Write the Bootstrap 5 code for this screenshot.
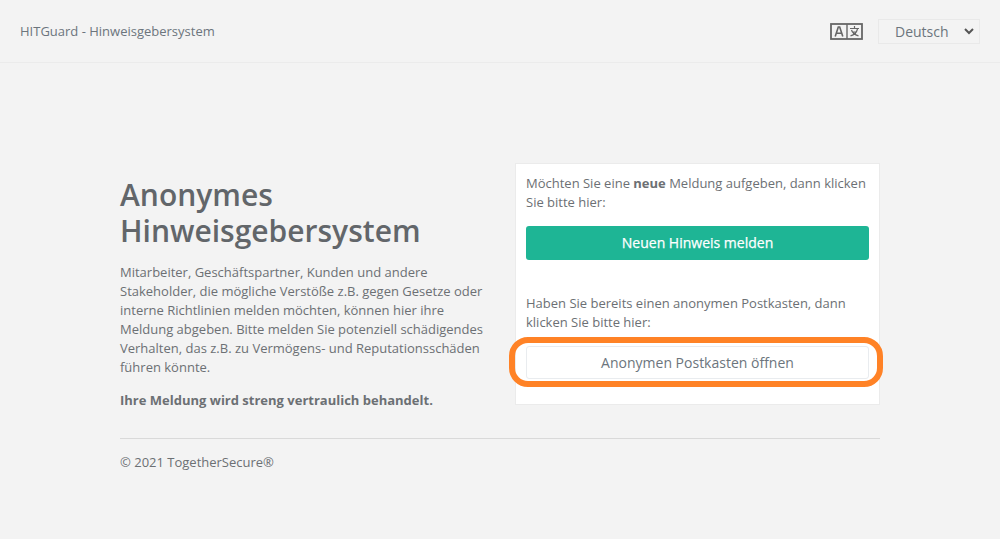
<!DOCTYPE html>
<html lang="de">
<head>
    <meta charset="UTF-8">
    <meta name="viewport" content="width=device-width, initial-scale=1.0">
    <title>HITGuard - Hinweisgebersystem</title>
    <link href="https://cdn.jsdelivr.net/npm/bootstrap@5.3.0/dist/css/bootstrap.min.css" rel="stylesheet">
    <style>
        body {
            background: #f3f3f3;
            color: #6c7074;
            font-family: "Open Sans", sans-serif;
            font-size: 13px;
            line-height: 19px;
        }
        .top-bar {
            height: 63px;
            padding: 0 20px;
            border-bottom: 1px solid #ebebeb;
        }
        .brand-text { font-size: 13px; color: #6c757d; }
        .lang-tools { gap: 15px; }
        .lang-select {
            width: 102px;
            height: 25px;
            padding: 0 0 0 16px;
            font-size: 14px;
            line-height: 23px;
            color: #6c757d;
            background-color: #f3f3f3;
            background-image: url("data:image/svg+xml,%3csvg xmlns='http://www.w3.org/2000/svg' viewBox='0 0 10 7'%3e%3cpath fill='none' stroke='%23555' stroke-width='2' d='M1 1l4 4 4-4'/%3e%3c/svg%3e");
            background-position: right 5px center;
            background-size: 10px 7px;
            border: 1px solid #e9e9e9;
            border-radius: 0;
        }
        .page-body {
            width: 760px;
            margin: 0 auto;
            padding-top: 100px;
        }
        .intro-col { width: 365px; padding-top: 14px; }
        .intro-col h1 {
            font-size: 30px;
            line-height: 36px;
            font-weight: 600;
            color: #62666a;
            margin-bottom: 14px;
        }
        .intro-col p { margin-bottom: 14px; }
        .intro-col p:last-child { margin-bottom: 0; }
        .action-box {
            width: 365px;
            height: 242px;
            padding: 10px;
            background: #fff;
            border: 1px solid #ebebeb;
        }
        .action-box p { margin: 0; }
        .btn-report {
            height: 34px;
            margin: 14px 0 34px;
            font-size: 14px;
            line-height: 34px;
            padding: 0;
            color: #fff;
            -webkit-text-stroke: 0.25px #fff;
            background: #1eb595;
            border: 0;
            border-radius: 3px;
        }
        .btn-mailbox {
            height: 33px;
            font-size: 14px;
            line-height: 31px;
            padding: 0;
            color: #6c757d;
            background: #fff;
            border: 1px solid #e9ecef;
            border-radius: 3px;
        }
        .mailbox-wrap { position: relative; margin-top: 14px; }
        .ring-mark {
            position: absolute;
            left: -17px;
            right: -14px;
            top: -9px;
            bottom: -8px;
            border: 6px solid #ff8226;
            border-radius: 19px;
            pointer-events: none;
        }
        .page-foot {
            margin-top: 28px;
            padding-top: 14px;
            border-top: 1px solid #d9d9d9;
        }
    </style>
</head>
<body>
    <header class="top-bar d-flex align-items-center justify-content-between">
        <span class="brand-text">HITGuard - Hinweisgebersystem</span>
        <div class="lang-tools d-flex align-items-center">
            <svg width="33" height="17" viewBox="0 0 33 17" aria-hidden="true">
                <rect x="1" y="1" width="31" height="15" fill="none" stroke="#666" stroke-width="1.8"/>
                <path d="M17 1v15" stroke="#666" stroke-width="1.4"/>
                <path d="M5.200 13.500 8.300 4h1.400l3.100 9.500M6.300 10.300h5.400" fill="none" stroke="#666" stroke-width="1.6"/>
                <path d="M20 5.500h9M24.500 3v2.500M21.500 7c.8 2.700 3.300 4.800 7 5.800M27.500 6c-.8 3.200-3.500 5.800-7 6.800M22 9h5" fill="none" stroke="#666" stroke-width="1.200"/>
            </svg>
            <select class="form-select lang-select" aria-label="Sprache">
                <option>Deutsch</option>
                <option>English</option>
            </select>
        </div>
    </header>

    <main class="page-body">
        <div class="d-flex justify-content-between">
            <div class="intro-col">
                <h1>Anonymes Hinweisgebersystem</h1>
                <p>Mitarbeiter, Geschäftspartner, Kunden und andere Stakeholder, die mögliche Verstöße z.B. gegen Gesetze oder interne Richtlinien melden möchten, können hier ihre Meldung abgeben. Bitte melden Sie potenziell schädigendes Verhalten, das z.B. zu Vermögens- und Reputationsschäden führen könnte.</p>
                <p class="fw-bold">Ihre Meldung wird streng vertraulich behandelt.</p>
            </div>
            <div class="action-box">
                <p>Möchten Sie eine <b>neue</b> Meldung aufgeben, dann klicken Sie bitte hier:</p>
                <button type="button" class="btn btn-report w-100 d-block">Neuen Hinweis melden</button>
                <p>Haben Sie bereits einen anonymen Postkasten, dann klicken Sie bitte hier:</p>
                <div class="mailbox-wrap">
                    <button type="button" class="btn btn-mailbox w-100 d-block">Anonymen Postkasten öffnen</button>
                    <span class="ring-mark"></span>
                </div>
            </div>
        </div>
        <footer class="page-foot">© 2021 TogetherSecure®</footer>
    </main>
</body>
</html>
